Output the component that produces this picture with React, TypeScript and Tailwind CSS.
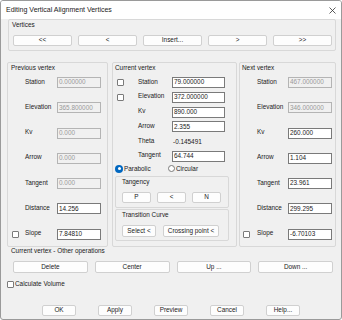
import React from 'react'

const Btn = ({ label, className = '' }: { label: string; className?: string }) => (
  <button className={`h-[11px] flex items-center justify-center bg-[#fdfdfd] border border-[#d0d0d0] rounded-[2px] text-[#1b1b1b] leading-none ${className}`}>
    {label}
  </button>
)

const Check = () => <div className="w-[7px] h-[7px] border border-[#7a7a7a] rounded-[1px] bg-white" />

const Field = ({ value, disabled = false, w }: { value: string; disabled?: boolean; w: string }) => (
  <div
    className={`h-[11px] ${w} flex items-center pl-[1px] leading-none border ${
      disabled ? 'border-[#b4b4b4] bg-[#f0f0f0] text-[#9a9a9a]' : 'border-[#7a7a7a] bg-white text-[#1b1b1b]'
    }`}
  >
    {value}
  </div>
)

type Row = { label: string; value: string; disabled?: boolean; check?: boolean }

const SideRow = ({ row, slot, labelW }: { row: Row; slot: string; labelW: string }) => (
  <div className="flex items-center h-[11px]">
    <div className={slot}>{row.check && <Check />}</div>
    <div className={`${labelW} -mt-[2px]`}>{row.label}</div>
    <Field value={row.value} disabled={row.disabled} w="w-[44px]" />
  </div>
)

const previous: Row[] = [
  { label: 'Station', value: '0.000000', disabled: true },
  { label: 'Elevation', value: '365.800000', disabled: true },
  { label: 'Kv', value: '0.000', disabled: true },
  { label: 'Arrow', value: '0.000', disabled: true },
  { label: 'Tangent', value: '0.000', disabled: true },
  { label: 'Distance', value: '14.256' },
  { label: 'Slope', value: '7.84810', check: true },
]

const next: Row[] = [
  { label: 'Station', value: '467.000000', disabled: true },
  { label: 'Elevation', value: '346.000000', disabled: true },
  { label: 'Kv', value: '260.000' },
  { label: 'Arrow', value: '1.104' },
  { label: 'Tangent', value: '23.961' },
  { label: 'Distance', value: '299.295' },
  { label: 'Slope', value: '-6.70103', check: true },
]

const current: Row[] = [
  { label: 'Station', value: '79.000000', check: true },
  { label: 'Elevation', value: '372.000000', check: true },
  { label: 'Kv', value: '890.000' },
  { label: 'Arrow', value: '2.355' },
]

export default function App() {
  return (
    <div className="w-[342px] h-[320px] bg-[#f0f0f0] border border-[#9a9a9a] rounded-[3px] flex flex-col font-['Liberation_Sans',Arial,sans-serif] text-[6.4px] leading-[8px] text-[#1a1a1a] overflow-hidden">
      {/* title bar */}
      <div className="h-[18px] bg-white flex items-center justify-between pl-[5px] pr-[5px] shrink-0">
        <span className="text-[7px]">Editing Vertical Alignment Vertices</span>
        <svg width="7" height="7" viewBox="0 0 7 7">
          <path d="M0.5 0.5 L6.5 6.5 M6.5 0.5 L0.5 6.5" stroke="#333" strokeWidth="0.8" />
        </svg>
      </div>

      <div className="pl-[6px] pr-[5px] flex flex-col">
        {/* vertices */}
        <div className="ml-[1px] h-[32px] border border-[#d8d8d8] rounded-[2px] flex flex-col pl-[3px] pr-[3px]">
          <div className="pt-[1px]">Vertices</div>
          <div className="flex gap-[6px] mt-[6px] pl-[1px]">
            {['<<', '<', 'Insert...', '>', '>>'].map(b => (
              <Btn key={b} label={b} className="flex-1" />
            ))}
          </div>
        </div>

        {/* columns */}
        <div className="flex mt-[11px] h-[185px]">
          <div className="w-[101px] border border-[#d8d8d8] rounded-[2px] flex flex-col">
            <div className="pl-[3px] pt-[1px]">Previous vertex</div>
            <div className="flex flex-col gap-[14.3px] mt-[5px] pl-[4px]">
              {previous.map(r => (
                <SideRow key={r.label} row={r} slot="w-[13px]" labelW="w-[32px]" />
              ))}
            </div>
          </div>

          <div className="w-[125px] ml-[4px] border border-[#d8d8d8] rounded-[2px] flex flex-col">
            <div className="pl-[2px] pt-[1px]">Current vertex</div>
            <div className="flex flex-col gap-[3.8px] mt-[5px] pl-[4px]">
              {current.map(r => (
                <div key={r.label} className="flex items-center h-[11px]">
                  <div className="w-[21px]">{r.check && <Check />}</div>
                  <div className="w-[34px] -mt-[2px]">{r.label}</div>
                  <Field value={r.value} w="w-[53px]" />
                </div>
              ))}
              <div className="flex items-center h-[11px]">
                <div className="w-[21px]" />
                <div className="w-[34px] -mt-[2px]">Theta</div>
                <div className="pl-[1px]">-0.145491</div>
              </div>
              <div className="flex items-center h-[11px]">
                <div className="w-[21px]" />
                <div className="w-[34px] -mt-[2px]">Tangent</div>
                <Field value="64.744" w="w-[53px]" />
              </div>
            </div>
            <div className="flex items-center h-[10px] mt-[2px] pl-[2px]">
              <div className="w-[8px] h-[8px] rounded-full bg-[#0067c0] flex items-center justify-center">
                <div className="w-[3px] h-[3px] rounded-full bg-white" />
              </div>
              <span className="ml-[1px] w-[44px]">Parabolic</span>
              <div className="w-[7px] h-[7px] rounded-full border border-[#7a7a7a] bg-white" />
              <span className="ml-[1px]">Circular</span>
            </div>
            <div className="ml-[2px] mr-[7px] mt-[2px] h-[32px] border border-[#d8d8d8] rounded-[2px] flex flex-col pl-[6px]">
              <div className="pt-[1px]">Tangency</div>
              <div className="flex gap-[6px] mt-[6px]">
                <Btn label="P" className="w-[29px]" />
                <Btn label="<" className="w-[29px]" />
                <Btn label="N" className="w-[29px]" />
              </div>
            </div>
            <div className="ml-[2px] mr-[7px] mt-[1px] h-[32px] border border-[#d8d8d8] rounded-[2px] flex flex-col pl-[6px]">
              <div className="pt-[1px]">Transition Curve</div>
              <div className="flex gap-[7px] mt-[6px]">
                <Btn label="Select <" className="w-[34px] h-[12px]" />
                <Btn label="Crossing point <" className="w-[56px] h-[12px]" />
              </div>
            </div>
          </div>

          <div className="w-[97px] ml-[2px] border border-[#d8d8d8] rounded-[2px] flex flex-col">
            <div className="pl-[2px] pt-[1px]">Next vertex</div>
            <div className="flex flex-col gap-[14.3px] mt-[5px] pl-[3px]">
              {next.map(r => (
                <SideRow key={r.label} row={r} slot="w-[14px]" labelW="w-[31px]" />
              ))}
            </div>
          </div>
        </div>

        {/* other operations */}
        <div className="pl-[4px]">Current vertex - Other operations</div>
        <div className="flex gap-[7px] mt-[6px] pl-[6px] pr-[3px]">
          {['Delete', 'Center', 'Up ...', 'Down ...'].map(b => (
            <Btn key={b} label={b} className="flex-1 h-[12px]" />
          ))}
        </div>

        <div className="flex items-center h-[8px] mt-[7px]">
          <Check />
          <span className="ml-[1px]">Calculate Volume</span>
        </div>

        <div className="flex gap-[22px] mt-[17px] pl-[35px]">
          <Btn label="OK" className="w-[34px] border-[1.5px] border-[#0067c0]" />
          <Btn label="Apply" className="w-[34px]" />
          <Btn label="Preview" className="w-[34px]" />
          <Btn label="Cancel" className="w-[34px]" />
          <Btn label="Help..." className="w-[34px]" />
        </div>
      </div>
    </div>
  )
}
